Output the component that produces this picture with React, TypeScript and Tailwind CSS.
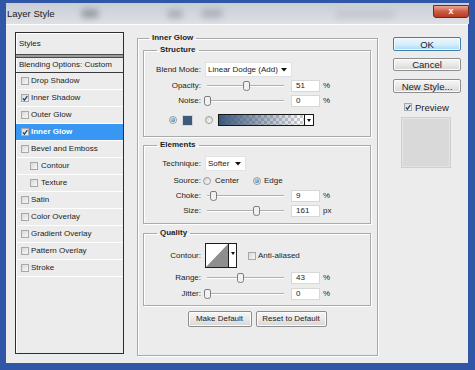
import React from 'react';

type Kids = { children?: React.ReactNode };

const Tri = () => (
  <svg width="6" height="4" viewBox="0 0 6 4" className="shrink-0">
    <path d="M0 0 H6 L3 3.5 Z" fill="#111" />
  </svg>
);

const Box = ({ checked }: { checked?: boolean }) => (
  <span className="w-[8px] h-[8px] shrink-0 border border-[#a8a8a8] bg-gradient-to-br from-[#d9d9d9] to-[#f8f8f8] flex items-center justify-center">
    {checked && (
      <svg width="7" height="7" viewBox="0 0 7 7">
        <path d="M1 3.4 L2.8 5.4 L6.2 0.8" stroke="#1f3f7c" strokeWidth="1.5" fill="none" />
      </svg>
    )}
  </span>
);

const Radio = ({ on }: { on?: boolean }) => (
  <span className="w-[8px] h-[8px] shrink-0 rounded-full border border-[#9c9c9c] bg-gradient-to-br from-[#d4d4d4] to-[#fbfbfb] flex items-center justify-center">
    {on && <span className="w-[4px] h-[4px] rounded-full bg-[radial-gradient(circle_at_35%_35%,#a6dcf8,#1b5d9c)]" />}
  </span>
);

const Slider = ({ pct }: { pct: number }) => (
  <div className="relative w-[81px] h-[14px] shrink-0">
    <div className="mx-[2px] mt-[6px] h-[2px] border-t border-[#b0b0b0] border-b border-b-white" />
    <svg
      width="7"
      height="10"
      viewBox="0 0 7 10"
      className="absolute top-[2px]"
      style={{ left: 2 + (pct * 77) / 100 - 3.5 }}
    >
      <path d="M0.5 2 Q0.5 0.5 2 0.5 H5 Q6.5 0.5 6.5 2 V7.5 Q6.5 9.5 3.5 9.5 Q0.5 9.5 0.5 7.5 Z" fill="#f1f1f1" stroke="#7d7d7d" />
    </svg>
  </div>
);

const Num = ({ v }: { v: string }) => (
  <div className="ml-[5px] w-[29px] h-[12px] bg-white border border-[#d8d8d8] flex items-center pl-[4px]">{v}</div>
);

const Select = ({ w, v }: { w: string; v: string }) => (
  <div className={`${w} h-[15px] bg-white border border-[#e2e2e2] flex items-center justify-between pl-[2px] pr-[4px]`}>
    <span className="whitespace-nowrap">{v}</span>
    <Tri />
  </div>
);

const Row = ({ label, cls, children }: Kids & { label: string; cls: string }) => (
  <div className={`flex items-center ${cls}`}>
    <span className="w-[57px] text-right shrink-0">{label}</span>
    <div className="ml-[4px] flex items-center">{children}</div>
  </div>
);

const SliderRow = ({ label, cls, pct, v, unit }: { label: string; cls: string; pct: number; v: string; unit: string }) => (
  <Row label={label} cls={cls}>
    <Slider pct={pct} />
    <Num v={v} />
    <span className="ml-[3px]">{unit}</span>
  </Row>
);

const Group = ({ title, legend, cls, children }: Kids & { title: string; legend: string; cls: string }) => (
  <fieldset className={`border border-[#aaaaaa] shadow-[inset_1px_1px_0_#fff,1px_1px_0_#fff] ${cls}`}>
    <legend className={`${legend} px-[3px] font-bold h-[10px] leading-[10px]`}>{title}</legend>
    {children}
  </fieldset>
);

const StyleItem = ({ label, checked, active, sub }: { label: string; checked?: boolean; active?: boolean; sub?: boolean }) => (
  <div
    className={`h-[17px] flex items-center border-b border-white ${sub ? 'pl-[14px]' : 'pl-[5px]'} ${
      active ? 'bg-[#3797f2] text-white font-bold' : ''
    }`}
  >
    <Box checked={checked} />
    <span className={sub ? 'ml-[3px]' : 'ml-[2px]'}>{label}</span>
  </div>
);

const Btn = ({ cls, children }: Kids & { cls: string }) => (
  <div
    className={`${cls} flex items-center justify-center rounded-[2px] border border-[#8d8d8d] bg-gradient-to-b from-[#f6f6f6] via-[#e9e9e9] to-[#d6d6d6] shadow-[inset_0_0_0_1px_#fcfcfc]`}
  >
    {children}
  </div>
);

export default function App() {
  return (
    <div className="w-[475px] h-[370px] bg-[#2f56a7] pt-[3px] pl-[6px] pr-[7px] pb-[7px] flex flex-col font-['Liberation_Sans',Arial,sans-serif] text-[8px] leading-[10px] text-[#1c1c1c]">
      {/* title bar */}
      <div className="h-[21px] flex items-start bg-gradient-to-b from-[#c9ced6] to-[#dde0e4] mr-[-1px]">
        <span className="mt-[6px] ml-[1px] text-[9.5px] text-[#1a1a1a]">Layer Style</span>
        <div className="mt-[6px] ml-[26px] w-[18px] h-[9px] rounded-full bg-[#7f858d] blur-[3px] opacity-70" />
        <div className="mt-[7px] ml-[68px] w-[16px] h-[8px] rounded-full bg-[#8b9099] blur-[3px] opacity-60" />
        <div className="mt-[6px] ml-[18px] w-[22px] h-[9px] rounded-full bg-[#959aa2] blur-[3px] opacity-60" />
        <div className="mt-[7px] ml-[112px] w-[60px] h-[8px] rounded-full bg-[#c3c7cd] blur-[3px]" />
        <div className="ml-auto mt-[2px] w-[36px] h-[13px] rounded-b-[3px] border border-[#6b2a22] bg-gradient-to-b from-[#e8a597] via-[#cd5a45] to-[#b83a25] flex items-center justify-center text-white font-bold text-[9px] leading-none">
          x
        </div>
      </div>

      {/* body */}
      <div className="flex-1 flex items-start bg-[#ececec] border-t border-white">
        {/* styles list */}
        <div className="ml-[9px] mt-[7px] w-[109px] h-[322px] border border-[#2e2e2e] shadow-[inset_1px_1px_0_#fff] flex flex-col shrink-0">
          <div className="h-[21px] flex items-center pl-[3px]">Styles</div>
          <div className="h-[4px] border-y border-[#4a4a4a] bg-[#9c9c9c]" />
          <div className="h-[15px] flex items-center pl-[3px] border-b border-[#3a3a3a] whitespace-nowrap">Blending Options: Custom</div>
          <StyleItem label="Drop Shadow" />
          <StyleItem label="Inner Shadow" checked />
          <StyleItem label="Outer Glow" />
          <StyleItem label="Inner Glow" checked active />
          <StyleItem label="Bevel and Emboss" />
          <StyleItem label="Contour" sub />
          <StyleItem label="Texture" sub />
          <StyleItem label="Satin" />
          <StyleItem label="Color Overlay" />
          <StyleItem label="Gradient Overlay" />
          <StyleItem label="Pattern Overlay" />
          <StyleItem label="Stroke" />
        </div>

        {/* inner glow panel */}
        <Group title="Inner Glow" legend="ml-[11px]" cls="ml-[13px] mt-[8px] w-[241px] h-[323px] shrink-0">
          <div className="pl-[5px] pr-[6px]">
            <Group title="Structure" legend="ml-[13px]" cls="mt-[2px] pb-[10px]">
              <Row label="Blend Mode:" cls="mt-[7px] h-[15px]">
                <Select w="w-[87px]" v="Linear Dodge (Add)" />
              </Row>
              <SliderRow label="Opacity:" cls="mt-[2px] h-[14px]" pct={51} v="51" unit="%" />
              <SliderRow label="Noise:" cls="mt-[1px] h-[14px]" pct={0} v="0" unit="%" />
              <div className="mt-[6px] h-[12px] flex items-center pl-[25px]">
                <Radio on />
                <div className="ml-[5px] w-[11px] h-[11px] bg-[#3e5b7b] border border-[#cfd6df]" />
                <div className="ml-[12px]">
                  <Radio />
                </div>
                <div className="ml-[5px] w-[96px] h-[12px] flex border border-[#161616]">
                  <div className="flex-1 bg-[image:linear-gradient(90deg,#3c587a,rgba(60,88,122,0)),repeating-conic-gradient(#cdcdcd_0%_25%,#ffffff_0%_50%)] bg-[length:100%_100%,6px_6px]" />
                  <div className="w-[9px] border-l border-[#161616] bg-white flex items-center justify-center">
                    <svg width="4" height="3" viewBox="0 0 4 3">
                      <path d="M0 0 H4 L2 3 Z" fill="#111" />
                    </svg>
                  </div>
                </div>
              </div>
            </Group>

            <Group title="Elements" legend="ml-[13px]" cls="mt-[3px] pb-[5px]">
              <Row label="Technique:" cls="mt-[6px] h-[15px]">
                <Select w="w-[41px]" v="Softer" />
              </Row>
              <div className="mt-[3px] h-[14px] flex items-center">
                <span className="w-[57px] text-right shrink-0">Source:</span>
                <div className="ml-[2px]">
                  <Radio />
                </div>
                <span className="ml-[4px]">Center</span>
                <div className="ml-[14px]">
                  <Radio on />
                </div>
                <span className="ml-[3px]">Edge</span>
              </div>
              <SliderRow label="Choke:" cls="mt-[1px] h-[14px]" pct={9} v="9" unit="%" />
              <SliderRow label="Size:" cls="mt-[1px] h-[14px]" pct={64} v="161" unit="px" />
            </Group>

            <Group title="Quality" legend="ml-[13px]" cls="mt-[4px] pb-[4px]">
              <Row label="Contour:" cls="mt-[5px] h-[25px]">
                <div className="w-[32px] h-[25px] flex border border-[#1e1e1e] bg-white">
                  <svg width="22" height="23" viewBox="0 0 22 23" className="shrink-0">
                    <path d="M0 23 L22 0 V23 Z" fill="#8e8e8e" />
                  </svg>
                  <div className="flex-1 border-l border-[#1e1e1e] flex justify-center pt-[8px]">
                    <svg width="4" height="3" viewBox="0 0 4 3">
                      <path d="M0 0 H4 L2 3 Z" fill="#111" />
                    </svg>
                  </div>
                </div>
                <div className="ml-[11px]">
                  <Box />
                </div>
                <span className="ml-[2px]">Anti-aliased</span>
              </Row>
              <SliderRow label="Range:" cls="mt-[3px] h-[14px]" pct={43} v="43" unit="%" />
              <SliderRow label="Jitter:" cls="mt-[2px] h-[14px]" pct={0} v="0" unit="%" />
            </Group>

            <div className="mt-[5px] flex justify-center gap-[4px]">
              <Btn cls="w-[64px] h-[16px]">Make Default</Btn>
              <Btn cls="w-[71px] h-[16px]">Reset to Default</Btn>
            </div>
          </div>
        </Group>

        {/* right column */}
        <div className="ml-[15px] mt-[12px] w-[68px] flex flex-col text-[9.5px] leading-[11px]">
          <div className="h-[14px] flex items-center justify-center rounded-[2px] border border-[#3c7fb1] bg-gradient-to-b from-[#eaf6fd] via-[#d9f0fc] to-[#a7d9f5] shadow-[inset_0_0_0_1px_#f4fbff]">
            OK
          </div>
          <Btn cls="mt-[7px] h-[13px]">Cancel</Btn>
          <Btn cls="mt-[8px] h-[14px]">New Style...</Btn>
          <div className="mt-[9px] h-[10px] flex items-center pl-[11px]">
            <Box checked />
            <span className="ml-[3px]">Preview</span>
          </div>
          <div className="mt-[5px] ml-[8px] w-[50px] h-[51px] bg-[#d9d9d9] border border-[#cfcfcf] shadow-[inset_0_0_0_1px_#e4e4e4]" />
        </div>
      </div>
    </div>
  );
}
